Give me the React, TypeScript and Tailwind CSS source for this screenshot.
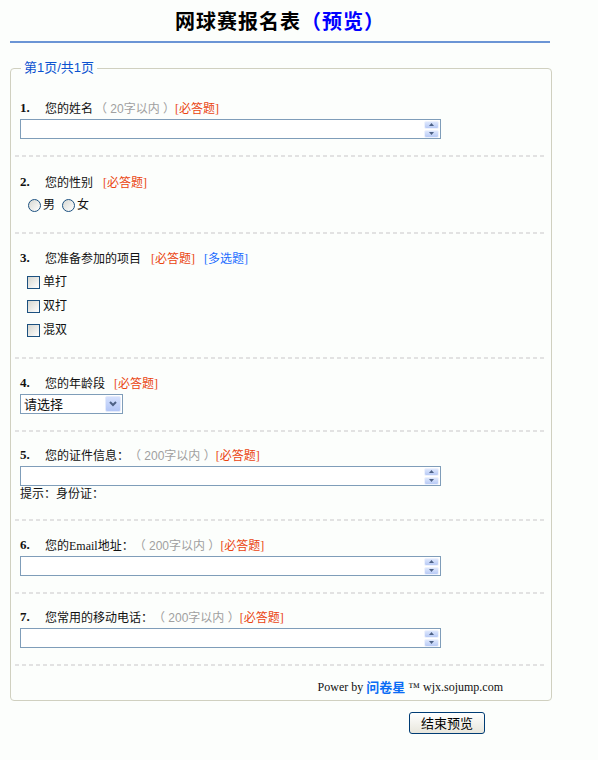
import React from "react";

const SERIF = "font-['Liberation_Serif','Noto_Sans_CJK_SC',serif]";

function Num({ n }: { n: number }) {
  return (
    <span className="inline-block w-[25px] font-['Liberation_Serif',serif] font-bold text-[13px] leading-[14px] self-start text-[#111]">
      {n}.
    </span>
  );
}

function Gray({ children }: { children: React.ReactNode }) {
  return (
    <span className="text-[#a0a0a0] font-['Liberation_Sans','Noto_Sans_CJK_SC',sans-serif] text-[12px]">
      {children}
    </span>
  );
}

function Req() {
  return <span className="text-[#ea4410] text-[12px]">[必答题]</span>;
}

function Title({
  n,
  label,
  extra,
}: {
  n: number;
  label: string;
  extra?: React.ReactNode;
}) {
  return (
    <div className="flex items-center h-[16px] leading-[16px] text-[12px] text-[#111]">
      <Num n={n} />
      <span>{label}</span>
      {extra}
    </div>
  );
}

function SpinBtn({ up }: { up: boolean }) {
  return (
    <div className="h-[8px] w-[15px] rounded-[2px] border border-[#eef2fd] bg-gradient-to-b from-[#dde7fd] to-[#b8caf5] flex items-center justify-center">
      <svg width="5" height="3" viewBox="0 0 5 3">
        {up ? (
          <path d="M2.5 0 L5 3 L0 3 Z" fill="#4d6185" />
        ) : (
          <path d="M0 0 L5 0 L2.5 3 Z" fill="#4d6185" />
        )}
      </svg>
    </div>
  );
}

function TextBox({ mt }: { mt: string }) {
  return (
    <div className={`flex w-[421px] h-[20px] border border-[#7f9db9] bg-white ${mt}`}>
      <div className="flex-1" />
      <div className="flex flex-col justify-center gap-px pr-px">
        <SpinBtn up />
        <SpinBtn up={false} />
      </div>
    </div>
  );
}

function Radio({ label }: { label: string }) {
  return (
    <span className="inline-flex items-center mr-[7px]">
      <span className="w-[13px] h-[13px] rounded-full border border-[#1c5180] bg-gradient-to-br from-[#d8d8d2] to-white" />
      <span className="ml-[2px]">{label}</span>
    </span>
  );
}

function Check({ label }: { label: string }) {
  return (
    <div className="flex items-center h-[24px] pl-[7px]">
      <span className="w-[13px] h-[13px] border border-[#1c5180] bg-gradient-to-br from-[#d6d6cf] to-white" />
      <span className="ml-[3px]">{label}</span>
    </div>
  );
}

function Sep() {
  return (
    <div className="mx-[4px] h-[2px] bg-[repeating-linear-gradient(90deg,#e2e2e2_0_4px,transparent_4px_7px)]" />
  );
}

export default function App() {
  return (
    <div
      className={`min-h-[760px] w-[598px] bg-[#fcfefc] pl-[10px] text-[12px] text-[#111] ${SERIF}`}
    >
      <div className="w-[540px]">
        <div className="h-[41px] flex items-center justify-center font-['Noto_Sans_CJK_SC',sans-serif] font-bold text-[20px] leading-[20px] pt-[1px] tracking-[1px]">
          <span className="text-black">网球赛报名表</span>
          <span className="text-[#0000ff]">（预览）</span>
        </div>
        <div className="h-[2px] bg-[#6b95d5]" />
      </div>

      <fieldset className="mt-[17px] w-[542px] border border-[#d0d0c0] rounded-[4px] p-0 m-0">
        <legend className="ml-[10px] px-[3px] text-[13px] leading-[16px] text-[#0b52d0] font-['Liberation_Sans','Noto_Sans_CJK_SC',sans-serif]">
          第1页/共1页
        </legend>

        {/* Q1 */}
        <div className="pt-[25px] pb-[16px] px-[9px]">
          <Title
            n={1}
            label="您的姓名"
            extra={
              <>
                <span className="ml-[2px]" />
                <Gray>（ 20字以内 ）</Gray>
                <Req />
              </>
            }
          />
          <TextBox mt="mt-[2px]" />
        </div>
        <Sep />

        {/* Q2 */}
        <div className="pt-[18px] pb-[19px] px-[9px]">
          <Title
            n={2}
            label="您的性别"
            extra={
              <span className="ml-[10px]">
                <Req />
              </span>
            }
          />
          <div className="flex items-center h-[16px] mt-[6px] pl-[8px]">
            <Radio label="男" />
            <Radio label="女" />
          </div>
        </div>
        <Sep />

        {/* Q3 */}
        <div className="pt-[17px] pb-[15px] px-[9px]">
          <Title
            n={3}
            label="您准备参加的项目"
            extra={
              <>
                <span className="ml-[10px]">
                  <Req />
                </span>
                <span className="ml-[9px] text-[#1a6cff]">[多选题]</span>
              </>
            }
          />
          <div className="mt-[3px]">
            <Check label="单打" />
            <Check label="双打" />
            <Check label="混双" />
          </div>
        </div>
        <Sep />

        {/* Q4 */}
        <div className="pt-[17px] pb-[16px] px-[9px]">
          <Title
            n={4}
            label="您的年龄段"
            extra={
              <span className="ml-[9px]">
                <Req />
              </span>
            }
          />
          <div className="mt-[2px] flex items-center w-[103px] h-[20px] border border-[#7f9db9] bg-white">
            <span className="flex-1 pl-[3px] text-[13px] leading-[16px] font-['Noto_Sans_CJK_SC',sans-serif]">
              请选择
            </span>
            <span className="w-[16px] h-[16px] mr-px rounded-[2px] bg-gradient-to-b from-[#d4e0fd] to-[#b3c6f6] border border-[#e4ebfc] flex items-center justify-center">
              <svg width="8" height="6" viewBox="0 0 8 6">
                <path
                  d="M1 1 L4 4 L7 1"
                  fill="none"
                  stroke="#4d6185"
                  strokeWidth="2"
                />
              </svg>
            </span>
          </div>
        </div>
        <Sep />

        {/* Q5 */}
        <div className="pt-[16px] pb-[17px] px-[9px]">
          <Title
            n={5}
            label="您的证件信息："
            extra={
              <>
                <Gray>（ 200字以内 ）</Gray>
                <Req />
              </>
            }
          />
          <TextBox mt="mt-[2px]" />
          <div className="h-[16px] leading-[16px]">提示：身份证：</div>
        </div>
        <Sep />

        {/* Q6 */}
        <div className="pt-[17px] pb-[16px] px-[9px]">
          <Title
            n={6}
            label="您的Email地址："
            extra={
              <>
                <Gray>（ 200字以内 ）</Gray>
                <Req />
              </>
            }
          />
          <TextBox mt="mt-[2px]" />
        </div>
        <Sep />

        {/* Q7 */}
        <div className="pt-[16px] pb-[16px] px-[9px]">
          <Title
            n={7}
            label="您常用的移动电话："
            extra={
              <>
                <Gray>（ 200字以内 ）</Gray>
                <Req />
              </>
            }
          />
          <TextBox mt="mt-[2px]" />
        </div>
        <Sep />

        <div className="pt-[13px] pb-[5px] flex justify-end pr-[48px] h-[34px] leading-[16px]">
          <span className="font-['Liberation_Serif',serif] text-[12px]">
            Power by{" "}
          </span>
          <span className="mx-[3px] text-[#0a6cf5] font-bold text-[13px] font-['Noto_Sans_CJK_SC',sans-serif]">
            问卷星
          </span>
          <span className="font-['Liberation_Serif',serif] text-[12px]">
            ™ wjx.sojump.com
          </span>
        </div>
      </fieldset>

      <div className="mt-[11px] pl-[399px]">
        <button className="w-[76px] h-[22px] rounded-[3px] border border-[#003c74] bg-gradient-to-b from-white to-[#e8e6dc] text-[13px] leading-[16px] text-black font-['Noto_Sans_CJK_SC',sans-serif]">
          结束预览
        </button>
      </div>
    </div>
  );
}
